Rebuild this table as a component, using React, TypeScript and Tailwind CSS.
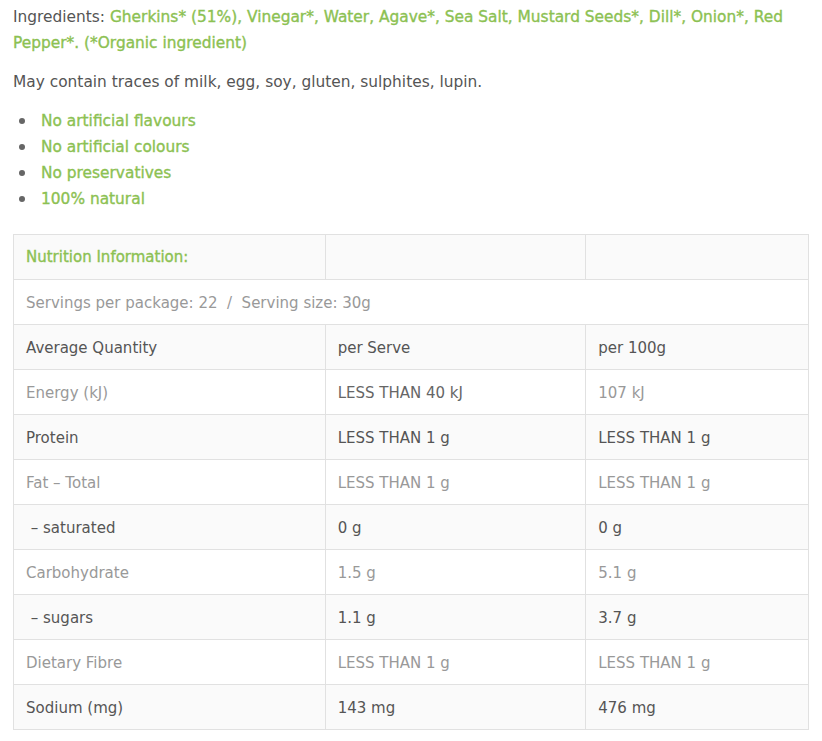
const green = 'text-[#8cc152] [-webkit-text-stroke:0.35px_#8cc152]';

type Row = { label: string; serve: string; per100: string; striped: boolean };

const rows: Row[] = [
  { label: 'Average Quantity', serve: 'per Serve', per100: 'per 100g', striped: true },
  { label: 'Energy (kJ)', serve: 'LESS THAN 40 kJ', per100: '107 kJ', striped: false },
  { label: 'Protein', serve: 'LESS THAN 1 g', per100: 'LESS THAN 1 g', striped: true },
  { label: 'Fat – Total', serve: 'LESS THAN 1 g', per100: 'LESS THAN 1 g', striped: false },
  { label: '\u00a0– saturated', serve: '0 g', per100: '0 g', striped: true },
  { label: 'Carbohydrate', serve: '1.5 g', per100: '5.1 g', striped: false },
  { label: '\u00a0– sugars', serve: '1.1 g', per100: '3.7 g', striped: true },
  { label: 'Dietary Fibre', serve: 'LESS THAN 1 g', per100: 'LESS THAN 1 g', striped: false },
  { label: 'Sodium (mg)', serve: '143 mg', per100: '476 mg', striped: true },
];

const bullets = ['No artificial flavours', 'No artificial colours', 'No preservatives', '100% natural'];

export default function App() {
  return (
    <div
      className="min-h-[741px] bg-white px-[13px] pt-[4px] text-[15.4px] text-[#555]"
      style={{ fontFamily: '"DejaVu Sans", sans-serif' }}
    >
      <p className="leading-[26px]">
        Ingredients:{' '}
        <span className={green}>
          Gherkins* (51%), Vinegar*, Water, Agave*, Sea Salt, Mustard Seeds*, Dill*, Onion*, Red Pepper*.
          (*Organic ingredient)
        </span>
      </p>
      <p className="mt-[13px] leading-[26px]">May contain traces of milk, egg, soy, gluten, sulphites, lupin.</p>
      <ul className="mt-[13px] leading-[26px]">
        {bullets.map((b) => (
          <li key={b} className="flex items-center">
            <span className="ml-[6px] mr-[16px] h-[6px] w-[6px] rounded-full bg-[#666]" />
            <span className={green}>{b}</span>
          </li>
        ))}
      </ul>
      <table className="mt-[22px] w-[796px] border-collapse text-[15px]">
        <colgroup>
          <col className="w-[312px]" />
          <col className="w-[261px]" />
          <col className="w-[223px]" />
        </colgroup>
        <tbody>
          <tr className="h-[45px] bg-[#fafafa]">
            <td className={`border border-[#e1e1e1] px-[12px] ${green}`}>Nutrition Information:</td>
            <td className="border border-[#e1e1e1]" />
            <td className="border border-[#e1e1e1]" />
          </tr>
          <tr className="h-[45px] bg-white">
            <td colSpan={3} className="border border-[#e1e1e1] px-[12px] pt-[2px] text-[#999]">
              Servings per package: 22&nbsp; /&nbsp; Serving size: 30g
            </td>
          </tr>
          {rows.map((r) => (
            <tr key={r.label} className={`h-[45px] ${r.striped ? 'bg-[#fafafa] text-[#555]' : 'bg-white text-[#999]'}`}>
              <td className="border border-[#e1e1e1] px-[12px] pt-[2px]">{r.label}</td>
              <td
                className={`border border-[#e1e1e1] px-[12px] pt-[2px] ${r.label.startsWith('Energy') ? 'text-[#666]' : ''}`}
              >
                {r.serve}
              </td>
              <td className="border border-[#e1e1e1] px-[12px] pt-[2px]">{r.per100}</td>
            </tr>
          ))}
        </tbody>
      </table>
    </div>
  );
}
